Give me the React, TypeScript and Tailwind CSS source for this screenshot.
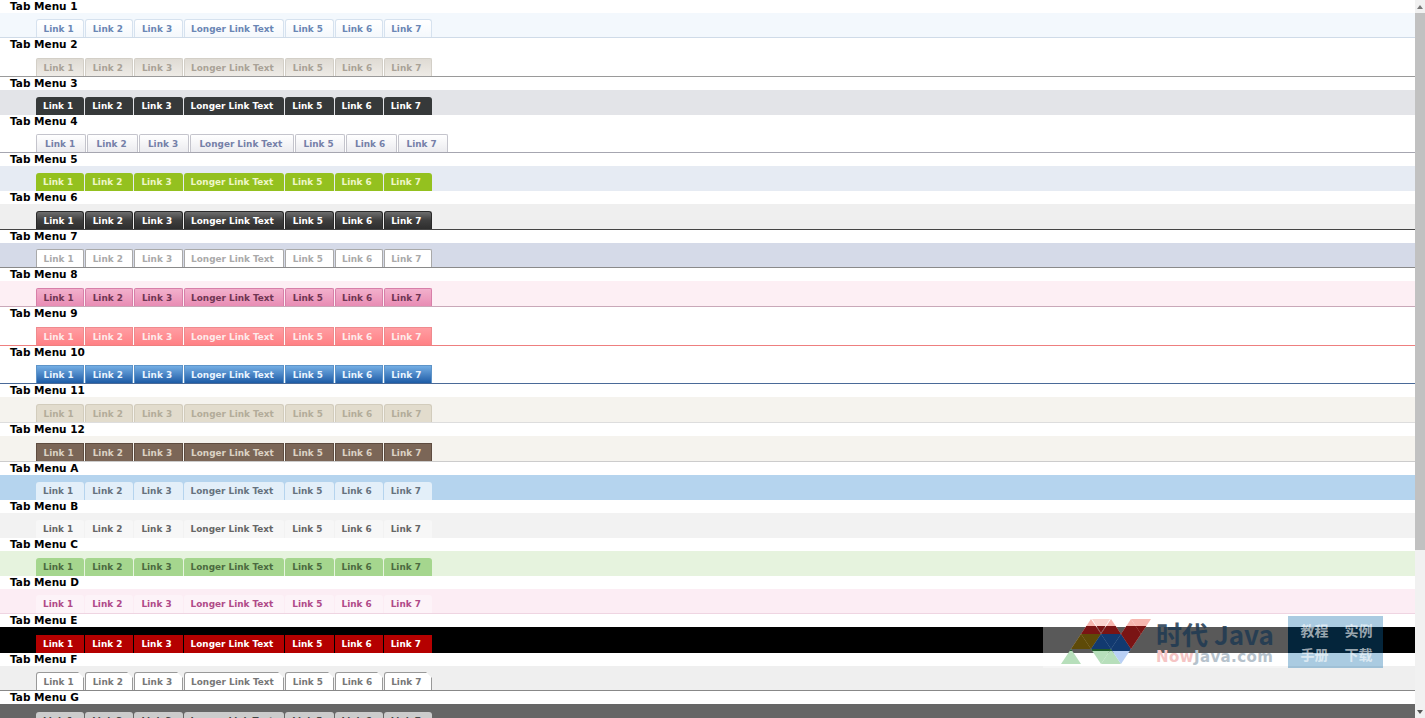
const links = ["Link 1", "Link 2", "Link 3", "Longer Link Text", "Link 5", "Link 6", "Link 7"];

// Types
type Menu = {
  title: string;
  bar: string;
  tab: string;
};

const menus: Menu[] = [
  {title: "Tab Menu 1", bar: "h-[25px] bg-[#f3f8fd] border-b border-[#cfdbe8]", tab: "pl-[6.5px] pr-[9.5px] rounded-t-[3px] bg-linear-to-b from-white to-[#f4f8fc] border-t border-x border-[#d6e2ef] text-[#6a86b4]"},
  {title: "Tab Menu 2", bar: "h-[26px] bg-white border-b border-[#9a9a9a]", tab: "pl-[6.5px] pr-[9.5px] rounded-t-[2px] bg-linear-to-b from-[#dfdbd4] to-[#eeebe6] border-t border-x border-[#d3cfc7] text-[#a9a297]"},
  {title: "Tab Menu 3", bar: "h-[25px] bg-[#e3e4e8]", tab: "pl-[7px] pr-[11px] rounded-t-[3px] bg-[#36393a] text-white"},
  {title: "Tab Menu 4", bar: "h-[25px] bg-white border-b border-[#a6a6b0]", tab: "pl-[8px] pr-[10.3px] rounded-t-[2px] bg-linear-to-b from-white to-[#ebebef] border-t border-x border-[#c4c4cc] text-[#7580a8]"},
  {title: "Tab Menu 5", bar: "h-[25px] bg-[#e6ebf3]", tab: "pl-[7px] pr-[11px] rounded-t-[3px] bg-[#94c11f] text-[#eef6c8]"},
  {title: "Tab Menu 6", bar: "h-[26px] bg-[#efefef] border-b border-[#444444]", tab: "pl-[6.5px] pr-[9.5px] rounded-t-[3px] bg-linear-to-b from-[#6e6e6e] via-[#3e3e3e] to-[#2e2e2e] border-t border-x border-[#2a2a2a] text-white"},
  {title: "Tab Menu 7", bar: "h-[25px] bg-[#d5dae8] border-b border-[#8a8a8a]", tab: "pl-[6.5px] pr-[9.5px] rounded-t-[2px] bg-white border-t border-x border-[#a9a9a9] text-[#aaaaaa]"},
  {title: "Tab Menu 8", bar: "h-[26px] bg-[#fdeff4] border-b border-[#c9a8b8]", tab: "pl-[6.5px] pr-[9.5px] rounded-t-[2px] bg-linear-to-b from-[#f2b0cc] to-[#e88cb4] border-t border-x border-[#d77fa8] text-[#6e3552]"},
  {title: "Tab Menu 9", bar: "h-[26px] bg-white border-b border-[#ee7f7f]", tab: "pl-[6.5px] pr-[9.5px] bg-linear-to-b from-[#ff9da2] to-[#ff8085] border-t border-x border-[#ef8a8e] text-[#fdeaea]"},
  {title: "Tab Menu 10", bar: "h-[25px] bg-white border-b border-[#4a6a98]", tab: "pl-[6.5px] pr-[9.5px] bg-linear-to-b from-[#74aee4] to-[#1d5ca6] border-t border-x border-[#5e94c8] text-[#e8f4ff]"},
  {title: "Tab Menu 11", bar: "h-[26px] bg-[#f5f3ee] border-b border-[#dddddd]", tab: "pl-[6.5px] pr-[9.5px] rounded-t-[3px] bg-[#e2dccd] border-t border-x border-[#d2ccbc] text-[#b3ac9a]"},
  {title: "Tab Menu 12", bar: "h-[26px] bg-[#f5f3ee] border-b border-[#cccccc]", tab: "pl-[6.5px] pr-[9.5px] bg-[#7b6657] border-t border-x border-[#5e4c40] text-[#dcd2c4]"},
  {title: "Tab Menu A", bar: "h-[25px] bg-[#b5d4ee]", tab: "pl-[7px] pr-[11px] rounded-t-[3px] bg-[#e3eff9] text-[#66727e]"},
  {title: "Tab Menu B", bar: "h-[25px] bg-[#f2f2f2]", tab: "pl-[7px] pr-[11px] rounded-t-[3px] bg-[#f7f7f7] text-[#666666]"},
  {title: "Tab Menu C", bar: "h-[25px] bg-[#e6f3de]", tab: "pl-[7px] pr-[11px] rounded-t-[3px] bg-[#a5d68e] text-[#4c6a40]"},
  {title: "Tab Menu D", bar: "h-[25px] bg-[#fcedf4] border-b border-[#efd5e2]", tab: "pl-[7px] pr-[11px] rounded-t-[3px] bg-[#fdf3f8] text-[#b04a88]"},
  {title: "Tab Menu E", bar: "h-[26px] bg-black", tab: "pl-[7px] pr-[11px] bg-[#b50000] text-white"},
  {title: "Tab Menu F", bar: "h-[25px] bg-[#efefef] border-b border-[#888888]", tab: "relative pl-[6.5px] pr-[9.5px] rounded-t-[3px] bg-white border-t border-x border-[#999999] text-[#777777] after:absolute after:-right-px after:-top-px after:h-0 after:w-0 after:border-l-[6px] after:border-t-[6px] after:border-l-transparent after:border-t-[#efefef] after:content-['']"},
  {title: "Tab Menu G", bar: "h-[26px] bg-[#666666]", tab: "pl-[7px] pr-[11px] rounded-t-[3px] bg-[#cccccc] text-[#444444]"},
];

// triangles of the watermark logo: points, light colour (on white), dark colour (on the black bar)
const logo: [string, string, string][] = [
  ["30,0 20,15 40,15", "#f7b7b0", "#7a1414"],
  ["31,0 49,0 40,14", "#fbd5d0", "#7a1414"],
  ["50,0 40,15 60,15", "#f7b7b0", "#7a1414"],
  ["70,0 60,15 80,15", "#f7b7b0", "#7a1414"],
  ["70,0 90,0 80,15", "#f7b7b0", "#7a1414"],
  ["20,15 10,30 30,30", "#d9c49a", "#5e4a08"],
  ["20,15 40,15 30,30", "#d9c49a", "#5e4a08"],
  ["40,15 30,30 50,30", "#a9bfe0", "#123a70"],
  ["40,15 60,15 50,30", "#a9bfe0", "#123a70"],
  ["60,15 50,30 70,30", "#a9bfe0", "#123a70"],
  ["60,15 80,15 70,30", "#f7b7b0", "#7a1414"],
  ["10,30 0,45 20,45", "#b7dfbb", "#1f5a2a"],
  ["30,30 50,30 40,45", "#b7dfbb", "#1f5a2a"],
  ["50,30 40,45 60,45", "#b7dfbb", "#1f5a2a"],
  ["50,30 70,30 60,45", "#b9d0f5", "#123a70"],
];

function TabMenu({menu}: {menu: Menu}) {
  return (
    <div>
      <h3 className="h-[13px] pl-[10px] text-[10.5px] leading-[13px] font-bold text-black">{menu.title}</h3>
      <div className={`${menu.bar} flex items-end pl-[36px]`}>
        <ul className="flex gap-px">
          {links.map((link) => (
            <li key={link} className={`${menu.tab} h-[18px] text-[8.9px] leading-[19px] font-bold`}>
              {link}
            </li>
          ))}
        </ul>
      </div>
    </div>
  );
}

function Watermark() {
  return (
    <div className="absolute left-[1043px] top-[616px] flex h-[52px] w-[340px]">
      <div className="flex w-[245px] items-center bg-white/35 pl-[18px]">
        <svg width="90" height="46" viewBox="0 0 90 46" className="shrink-0">
          <defs>
            <clipPath id="band">
              <rect x="0" y="7" width="90" height="25" />
            </clipPath>
          </defs>
          {logo.map(([points, light]) => (
            <polygon key={points} points={points} fill={light} />
          ))}
          <g clipPath="url(#band)">
            {logo.map(([points, , dark]) => (
              <polygon key={points} points={points} fill={dark} />
            ))}
          </g>
        </svg>
        <div className="ml-[5px] flex flex-col">
          <span className="text-[26px] leading-[31px] font-bold whitespace-nowrap text-[#1f3a52] opacity-85 [font-family:'Noto_Sans_CJK_SC','Noto_Sans',sans-serif]">时代 Java</span>
          <span className="text-[15px] leading-[17px] font-bold tracking-[0.4px] whitespace-nowrap text-[#b6c2cc]">
            <span className="text-[#f5c4c4]">Now</span>Java.com
          </span>
        </div>
      </div>
      <div className="grid w-[95px] grid-cols-[28px_28px] content-center gap-x-[16px] gap-y-[6px] bg-[#0c6aaa]/35 pl-[12.5px] text-[14px] leading-[18px] font-bold text-white/60 [font-family:'Noto_Sans_CJK_SC',sans-serif]">
        <span>教程</span>
        <span>实例</span>
        <span>手册</span>
        <span>下载</span>
      </div>
    </div>
  );
}

function Scrollbar() {
  return (
    <div className="flex h-full w-[10px] shrink-0 flex-col items-center bg-[#f1f1f1]">
      <div className="flex h-[13px] items-center justify-center">
        <div className="h-0 w-0 border-x-[3px] border-b-[4px] border-x-transparent border-b-[#777777]" />
      </div>
      <div className="h-[537px] w-full bg-[#c1c1c1]" />
      <div className="flex-1" />
      <div className="flex h-[13px] items-center justify-center">
        <div className="h-0 w-0 border-x-[3px] border-t-[4px] border-x-transparent border-t-[#555555]" />
      </div>
    </div>
  );
}

export default function App() {
  return (
    <div className="relative flex h-screen overflow-hidden bg-white [font-family:'DejaVu_Sans',sans-serif]">
      <div className="min-w-0 flex-1">
        {menus.map((menu) => (
          <TabMenu key={menu.title} menu={menu} />
        ))}
      </div>
      <Scrollbar />
      <Watermark />
    </div>
  );
}
